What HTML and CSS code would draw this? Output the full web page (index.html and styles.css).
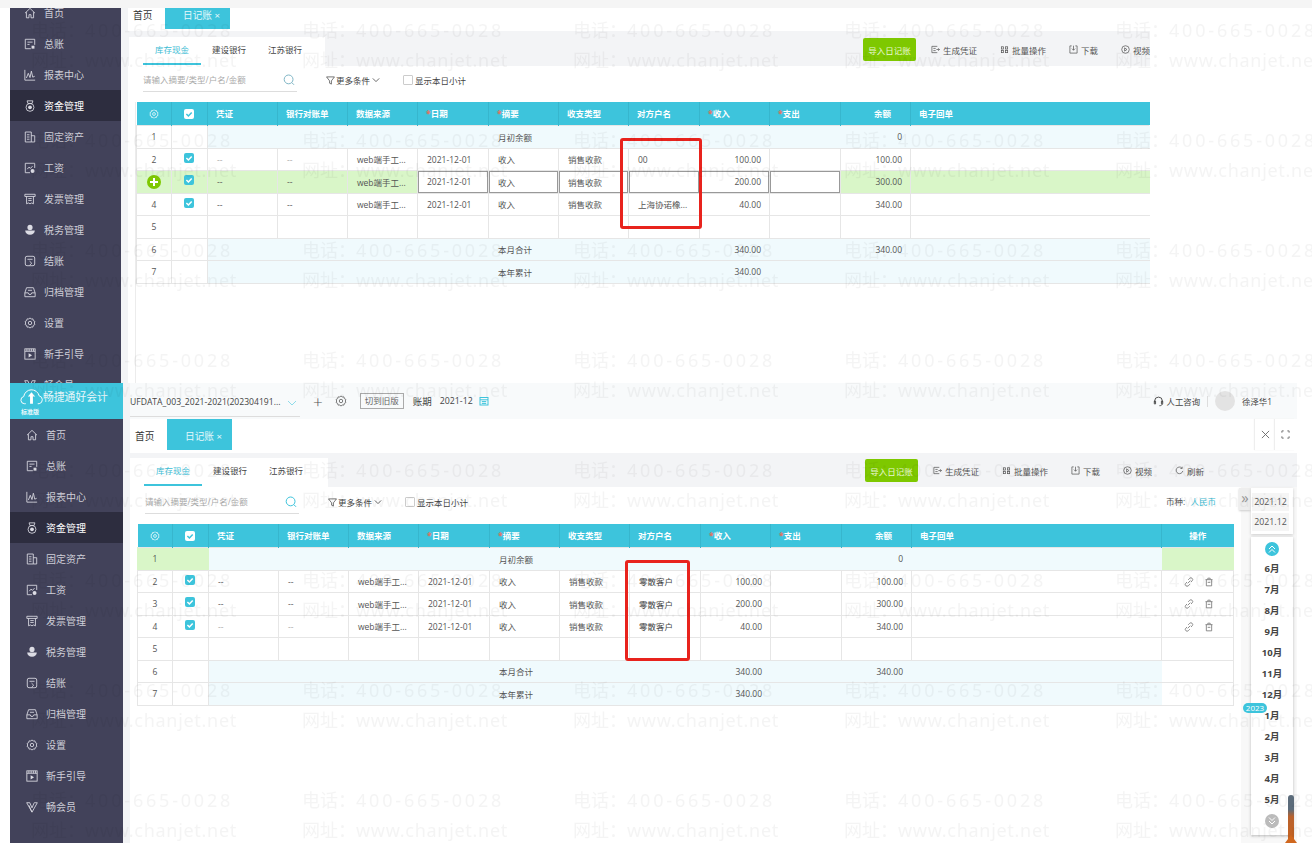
FILE: index.html
```html
<!DOCTYPE html>
<html>
<head>
  <meta charset="utf-8">
  <link rel="stylesheet" href="styles.css">
</head>
<body>
  <svg class="sprite">
    <symbol id="i-home" viewBox="0 0 14 14"><path d="M1.2 7.2 7 1.6l5.8 5.6M2.8 6v6.6h3V9h2.400v3.600h3V6"/></symbol>
    <symbol id="i-ledger" viewBox="0 0 14 14"><path d="M8 12.500H1.500v-11h11V8M4 4.800h6M4 7.500h2.500"/><rect class="solid" x="8.800" y="9" width="3.400" height="3.400"/></symbol>
    <symbol id="i-chart" viewBox="0 0 14 14"><path d="M1 1v12h12M2.800 10.500 5 5l2 5 1.600-7.500 1.600 7 2.300-1"/></symbol>
    <symbol id="i-bag" viewBox="0 0 14 14"><path d="M4.600 4 3.600 1h6.800l-1 3z"/><circle cx="7" cy="8.600" r="4.600"/><circle class="solid" cx="7" cy="8.600" r="2.200"/></symbol>
    <symbol id="i-doc" viewBox="0 0 14 14"><path d="M8.500 12.800h-7V1.200h7zM8.500 5.500h4v7.300h-4M3.400 4.400h3M3.400 7h3M3.400 9.600h3"/></symbol>
    <symbol id="i-pay" viewBox="0 0 14 14"><path d="M7 12.500H1.500v-11h11V7M3.800 8.400l2-2.400 1.800 1.400 2.400-2.600"/><circle class="solid" cx="10" cy="10.500" r="2.300"/></symbol>
    <symbol id="i-invoice" viewBox="0 0 14 14"><path d="M1 4V1.500h12V4M1 4h12M3 4v8.600l2-1 2 1 2-1 2 1V4M5 6.500h4M5 8.800h4"/></symbol>
    <symbol id="i-tax" viewBox="0 0 14 14"><circle class="solid" cx="7" cy="4" r="3"/><path class="solid" d="M1.400 7.600h11.200c0 3-2.400 5-5.600 5s-5.600-2-5.600-5z"/></symbol>
    <symbol id="i-close" viewBox="0 0 14 14"><rect x="1.500" y="1.500" width="11" height="11" rx="2"/><path d="M4 5h6M6.500 7.200 9 9.600l-2.500 2.400"/></symbol>
    <symbol id="i-archive" viewBox="0 0 14 14"><path d="M3 2h8l2 6v4.500H1V8zM1 8h4l.8 1.800h2.400L9 8h4M4.600 5h4.800"/></symbol>
    <symbol id="i-gear" viewBox="0 0 14 14"><path d="m7 1 1.400 1.400 2-.2.5 2 1.800 1L12 7l.7 1.800-1.800 1-.5 2-2-.2L7 13l-1.400-1.400-2 .2-.5-2-1.800-1L2 7l-.7-1.800 1.800-1 .5-2 2 .2z"/><circle cx="7" cy="7" r="2"/></symbol>
    <symbol id="i-guide" viewBox="0 0 14 14"><rect x="1" y="1" width="12" height="12"/><path d="M1 3.800h12M3.400 1v2.800M6 1v2.800M8.600 1v2.800M11 1v2.800"/><path class="solid" d="M5.400 6v5l4-2.500z"/></symbol>
    <symbol id="i-vip" viewBox="0 0 14 14"><path d="M.8 2h3.600L7 8l2.600-6h3.600L7 13zM3.400 5 7 13"/></symbol>
    <symbol id="i-check" viewBox="0 0 10 10"><path d="m2.400 5 2 2 3.300-3.600"/></symbol>
    <symbol id="i-search" viewBox="0 0 12 12"><circle cx="5.600" cy="5.400" r="4.400"/><path d="m8.800 8.600 2.200 2.200"/></symbol>
    <symbol id="i-filter" viewBox="0 0 10 10"><path d="M.6 1h8.800L6 5.400V9L4 8V5.400z"/></symbol>
    <symbol id="i-chev" viewBox="0 0 10 10"><path d="m1 3 4 4 4-4"/></symbol>
    <symbol id="i-dbl" viewBox="0 0 10 10"><path d="m2 5 3-3 3 3M2 8.500l3-3 3 3"/></symbol>
    <symbol id="i-gen" viewBox="0 0 10 10"><path d="M7 8.500H1v-7h6M2.600 3.800h2.600M2.600 6.200h2.600M6 5h3.400M8 3.600 9.400 5 8 6.400"/></symbol>
    <symbol id="i-batch" viewBox="0 0 10 10"><rect x="1.500" y="2" width="2.500" height="2.500"/><rect x="6" y="2" width="2.500" height="2.500"/><rect x="1.500" y="6" width="2.500" height="2.500"/><rect x="6" y="6" width="2.500" height="2.500"/></symbol>
    <symbol id="i-down" viewBox="0 0 10 10"><path d="M3 1H1v8h8V1H7M5 .8v5M3.200 4 5 5.800 6.800 4"/></symbol>
    <symbol id="i-video" viewBox="0 0 10 10"><circle cx="5" cy="5" r="4.200"/><path d="M4 3.200v3.600L6.600 5z"/></symbol>
    <symbol id="i-refresh" viewBox="0 0 10 10"><path d="M8.600 5.600A3.700 3.700 0 1 1 7.600 2.200M8 .8v2H6"/></symbol>
    <symbol id="i-link" viewBox="0 0 12 12"><path d="M5 3.400 6.800 1.600a2.100 2.100 0 0 1 3 3L8.400 6M7 8.600 5.200 10.400a2.100 2.100 0 0 1-3-3L3.600 6M4.400 7.600l3.200-3.200"/></symbol>
    <symbol id="i-trash" viewBox="0 0 12 12"><path d="M1.800 3.200h8.400M4.600 3V1.400h2.800V3M2.800 3.200v7.400h6.400V3.200M4.400 6.400h3.200"/></symbol>
    <symbol id="i-headset" viewBox="0 0 12 12"><path d="M1.800 7V5.400a4.200 4.200 0 0 1 8.400 0V7M1.400 5.600h1.400v3H1.400zM9.200 5.600h1.400v3H9.200zM10 8.600c0 1.400-1.200 2-3 2"/></symbol>
    <symbol id="i-cal" viewBox="0 0 10 10"><rect x="1" y="1.500" width="8" height="7.500"/><path d="M1 3.800h8M2.800 5.600h4.400M2.800 7.400h4.400"/></symbol>
    <symbol id="i-x" viewBox="0 0 10 10"><path d="m1 1 8 8M9 1 1 9"/></symbol>
    <symbol id="i-full" viewBox="0 0 10 10"><path d="M1 3V1h2M7 1h2v2M9 7v2H7M3 9H1V7"/></symbol>
    <symbol id="i-cloud" viewBox="0 0 24 18"><path d="M6 16H4.500a3.800 3.800 0 0 1-.6-7.500A8.200 8.200 0 0 1 20 7.800a4.200 4.200 0 0 1 0 8.200h-1.500"/><path class="solid" d="M12 4 8.200 8.400h2.300V16h3V8.400h2.300z"/></symbol>
  </svg>

  <div class="strip"></div>

  <!-- first capture -->
  <div class="shot upper">
    <aside class="side">
      <ul class="menu">
        <li class="menu-item"><svg class="mi"><use href="#i-home"/></svg>首页</li>
        <li class="menu-item"><svg class="mi"><use href="#i-ledger"/></svg>总账</li>
        <li class="menu-item"><svg class="mi"><use href="#i-chart"/></svg>报表中心</li>
        <li class="menu-item active"><svg class="mi"><use href="#i-bag"/></svg>资金管理</li>
        <li class="menu-item"><svg class="mi"><use href="#i-doc"/></svg>固定资产</li>
        <li class="menu-item"><svg class="mi"><use href="#i-pay"/></svg>工资</li>
        <li class="menu-item"><svg class="mi"><use href="#i-invoice"/></svg>发票管理</li>
        <li class="menu-item"><svg class="mi"><use href="#i-tax"/></svg>税务管理</li>
        <li class="menu-item"><svg class="mi"><use href="#i-close"/></svg>结账</li>
        <li class="menu-item"><svg class="mi"><use href="#i-archive"/></svg>归档管理</li>
        <li class="menu-item"><svg class="mi"><use href="#i-gear"/></svg>设置</li>
        <li class="menu-item"><svg class="mi"><use href="#i-guide"/></svg>新手引导</li>
        <li class="menu-item"><svg class="mi"><use href="#i-vip"/></svg>畅会员</li>
      </ul>
    </aside>
    <main class="main">
      <div class="tabbar">
        <span class="page-home">首页</span>
        <span class="page-tab">日记账 ×</span>
      </div>
      <div class="band">
        <div class="subtabs">
          <span class="subtab on">库存现金</span>
          <span class="subtab">建设银行</span>
          <span class="subtab">江苏银行</span>
        </div>
        <div class="toolbar">
          <button class="import">导入日记账</button>
          <span class="tool"><svg class="ti"><use href="#i-gen"/></svg>生成凭证</span>
          <span class="tool"><svg class="ti"><use href="#i-batch"/></svg>批量操作</span>
          <span class="tool"><svg class="ti"><use href="#i-down"/></svg>下载</span>
          <span class="tool"><svg class="ti"><use href="#i-video"/></svg>视频</span>
        </div>
      </div>
      <div class="filter">
        <div class="search">请输入摘要/类型/户名/金额<svg class="search-icon"><use href="#i-search"/></svg></div>
        <span class="more"><svg class="ti"><use href="#i-filter"/></svg>更多条件<svg class="chev"><use href="#i-chev"/></svg></span>
        <label class="daily"><span class="box"></span>显示本日小计</label>
      </div>
      <div class="sheet">
        <table class="grid">
          <colgroup><col class="c-no"><col class="c-ck"><col class="c"><col class="c"><col class="c"><col class="c1"><col class="c"><col class="c"><col class="c1"><col class="c"><col class="c1"><col class="c"><col></colgroup>
          <thead>
            <tr>
              <th class="mid"><svg class="hgear"><use href="#i-gear"/></svg></th>
              <th class="mid"><span class="ck white"><svg><use href="#i-check"/></svg></span></th>
              <th>凭证</th><th>银行对账单</th><th>数据来源</th>
              <th><i>*</i>日期</th><th><i>*</i>摘要</th><th>收支类型</th><th>对方户名</th>
              <th><i>*</i>收入</th><th><i>*</i>支出</th><th class="bal">余额</th><th>电子回单</th>
            </tr>
          </thead>
          <tbody>
            <tr class="sum">
              <td class="mid plain">1</td><td class="plain"></td><td></td><td></td><td></td><td></td><td>月初余额</td><td></td><td></td><td></td><td></td><td class="num">0</td><td></td>
            </tr>
            <tr>
              <td class="mid">2</td><td class="mid"><span class="ck"><svg><use href="#i-check"/></svg></span></td><td class="dash">--</td><td class="dash">--</td><td>web端手工...</td><td>2021-12-01</td><td>收入</td><td>销售收款</td><td>00</td><td class="num">100.00</td><td></td><td class="num">100.00</td><td class="open"></td>
            </tr>
            <tr class="editing">
              <td class="mid"><span class="add"></span></td><td class="mid"><span class="ck"><svg><use href="#i-check"/></svg></span></td><td>--</td><td>--</td><td>web端手工...</td><td class="edit">2021-12-01</td><td class="edit">收入</td><td class="edit">销售收款</td><td class="edit"></td><td class="edit num">200.00</td><td class="edit"></td><td class="num">300.00</td><td class="open"></td>
            </tr>
            <tr>
              <td class="mid">4</td><td class="mid"><span class="ck"><svg><use href="#i-check"/></svg></span></td><td>--</td><td>--</td><td>web端手工...</td><td>2021-12-01</td><td>收入</td><td>销售收款</td><td>上海协诺橡...</td><td class="num">40.00</td><td></td><td class="num">340.00</td><td class="open"></td>
            </tr>
            <tr>
              <td class="mid">5</td><td></td><td></td><td></td><td></td><td></td><td></td><td></td><td></td><td></td><td></td><td></td><td class="open"></td>
            </tr>
            <tr class="sum">
              <td class="mid plain">6</td><td class="plain"></td><td></td><td></td><td></td><td></td><td>本月合计</td><td></td><td></td><td class="num">340.00</td><td></td><td class="num">340.00</td><td></td>
            </tr>
            <tr class="sum">
              <td class="mid plain">7</td><td class="plain"></td><td></td><td></td><td></td><td></td><td>本年累计</td><td></td><td></td><td class="num">340.00</td><td></td><td></td><td></td>
            </tr>
          </tbody>
        </table>
        <div class="mark"></div>
      </div>
    </main>
  </div>

  <!-- second capture -->
  <div class="shot lower">
    <aside class="side">
      <div class="logo">
        <svg class="logo-cloud"><use href="#i-cloud"/></svg>
        <span class="logo-name">畅捷通好会计</span>
        <span class="logo-ed">标准版</span>
      </div>
      <ul class="menu">
        <li class="menu-item"><svg class="mi"><use href="#i-home"/></svg>首页</li>
        <li class="menu-item"><svg class="mi"><use href="#i-ledger"/></svg>总账</li>
        <li class="menu-item"><svg class="mi"><use href="#i-chart"/></svg>报表中心</li>
        <li class="menu-item active"><svg class="mi"><use href="#i-bag"/></svg>资金管理</li>
        <li class="menu-item"><svg class="mi"><use href="#i-doc"/></svg>固定资产</li>
        <li class="menu-item"><svg class="mi"><use href="#i-pay"/></svg>工资</li>
        <li class="menu-item"><svg class="mi"><use href="#i-invoice"/></svg>发票管理</li>
        <li class="menu-item"><svg class="mi"><use href="#i-tax"/></svg>税务管理</li>
        <li class="menu-item"><svg class="mi"><use href="#i-close"/></svg>结账</li>
        <li class="menu-item"><svg class="mi"><use href="#i-archive"/></svg>归档管理</li>
        <li class="menu-item"><svg class="mi"><use href="#i-gear"/></svg>设置</li>
        <li class="menu-item"><svg class="mi"><use href="#i-guide"/></svg>新手引导</li>
        <li class="menu-item"><svg class="mi"><use href="#i-vip"/></svg>畅会员</li>
      </ul>
    </aside>
    <main class="main">
      <div class="topbar">
        <div class="book">UFDATA_003_2021-2021(202304191...<svg class="chev teal"><use href="#i-chev"/></svg></div>
        <span class="plus">+</span>
        <svg class="top-gear"><use href="#i-gear"/></svg>
        <span class="old">切到旧版</span>
        <span class="period">账期</span>
        <span class="period-val">2021-12</span>
        <svg class="cal"><use href="#i-cal"/></svg>
        <div class="user">
          <svg class="headset"><use href="#i-headset"/></svg>
          <span>人工咨询</span>
          <span class="sep"></span>
          <span class="avatar"></span>
          <span>徐泽华1</span>
        </div>
      </div>
      <div class="tabbar">
        <span class="page-home">首页</span>
        <span class="page-tab">日记账 ×</span>
        <div class="win">
          <span class="win-btn"><svg><use href="#i-x"/></svg></span>
          <span class="win-btn"><svg><use href="#i-full"/></svg></span>
        </div>
      </div>
      <div class="band">
        <div class="subtabs">
          <span class="subtab on">库存现金</span>
          <span class="subtab">建设银行</span>
          <span class="subtab">江苏银行</span>
        </div>
        <div class="toolbar">
          <button class="import">导入日记账</button>
          <span class="tool"><svg class="ti"><use href="#i-gen"/></svg>生成凭证</span>
          <span class="tool"><svg class="ti"><use href="#i-batch"/></svg>批量操作</span>
          <span class="tool"><svg class="ti"><use href="#i-down"/></svg>下载</span>
          <span class="tool"><svg class="ti"><use href="#i-video"/></svg>视频</span>
          <span class="tool"><svg class="ti"><use href="#i-refresh"/></svg>刷新</span>
        </div>
      </div>
      <div class="filter">
        <div class="search">请输入摘要/类型/户名/金额<svg class="search-icon"><use href="#i-search"/></svg></div>
        <span class="more"><svg class="ti"><use href="#i-filter"/></svg>更多条件<svg class="chev"><use href="#i-chev"/></svg></span>
        <label class="daily"><span class="box"></span>显示本日小计</label>
        <span class="currency">币种: <b>人民币</b></span>
      </div>
      <div class="sheet">
        <table class="grid">
          <colgroup><col class="c-no"><col class="c-ck"><col class="c"><col class="c"><col class="c"><col class="c1"><col class="c"><col class="c"><col class="c1"><col class="c"><col class="c1"><col class="c"><col><col class="c-op"></colgroup>
          <thead>
            <tr>
              <th class="mid"><svg class="hgear"><use href="#i-gear"/></svg></th>
              <th class="mid"><span class="ck white"><svg><use href="#i-check"/></svg></span></th>
              <th>凭证</th><th>银行对账单</th><th>数据来源</th>
              <th><i>*</i>日期</th><th><i>*</i>摘要</th><th>收支类型</th><th>对方户名</th>
              <th><i>*</i>收入</th><th><i>*</i>支出</th><th class="bal">余额</th><th>电子回单</th><th class="mid">操作</th>
            </tr>
          </thead>
          <tbody>
            <tr class="sum">
              <td class="mid lime">1</td><td class="lime"></td><td></td><td></td><td></td><td></td><td>月初余额</td><td></td><td></td><td></td><td></td><td class="num">0</td><td></td><td class="lime"></td>
            </tr>
            <tr>
              <td class="mid">2</td><td class="mid"><span class="ck"><svg><use href="#i-check"/></svg></span></td><td>--</td><td>--</td><td>web端手工...</td><td>2021-12-01</td><td>收入</td><td>销售收款</td><td class="cust">零散客户</td><td class="num">100.00</td><td></td><td class="num">100.00</td><td></td>
              <td class="mid"><span class="ops"><svg><use href="#i-link"/></svg><svg><use href="#i-trash"/></svg></span></td>
            </tr>
            <tr>
              <td class="mid">3</td><td class="mid"><span class="ck"><svg><use href="#i-check"/></svg></span></td><td>--</td><td>--</td><td>web端手工...</td><td>2021-12-01</td><td>收入</td><td>销售收款</td><td class="cust">零散客户</td><td class="num">200.00</td><td></td><td class="num">300.00</td><td></td>
              <td class="mid"><span class="ops"><svg><use href="#i-link"/></svg><svg><use href="#i-trash"/></svg></span></td>
            </tr>
            <tr>
              <td class="mid">4</td><td class="mid"><span class="ck"><svg><use href="#i-check"/></svg></span></td><td class="dash">--</td><td class="dash">--</td><td>web端手工...</td><td>2021-12-01</td><td>收入</td><td>销售收款</td><td class="cust">零散客户</td><td class="num">40.00</td><td></td><td class="num">340.00</td><td></td>
              <td class="mid"><span class="ops"><svg><use href="#i-link"/></svg><svg><use href="#i-trash"/></svg></span></td>
            </tr>
            <tr>
              <td class="mid">5</td><td></td><td></td><td></td><td></td><td></td><td></td><td></td><td></td><td></td><td></td><td></td><td></td><td></td>
            </tr>
            <tr class="sum">
              <td class="mid plain">6</td><td class="plain"></td><td></td><td></td><td></td><td></td><td>本月合计</td><td></td><td></td><td class="num">340.00</td><td></td><td class="num">340.00</td><td></td><td class="plain"></td>
            </tr>
            <tr class="sum">
              <td class="mid plain">7</td><td class="plain"></td><td></td><td></td><td></td><td></td><td>本年累计</td><td></td><td></td><td class="num">340.00</td><td></td><td></td><td></td><td class="plain"></td>
            </tr>
          </tbody>
        </table>
        <div class="mark"></div>
      </div>

      <div class="rail">
        <span class="rail-toggle">»</span>
        <div class="rail-range">
          <span>2021.12</span>
          <span>2021.12</span>
        </div>
        <div class="rail-months">
          <span class="round up"><svg><use href="#i-dbl"/></svg></span>
          <span>6月</span><span>7月</span><span>8月</span><span>9月</span><span>10月</span><span>11月</span><span>12月</span>
          <span>1月</span><span>2月</span><span>3月</span><span>4月</span><span>5月</span>
          <span class="round down"><svg><use href="#i-dbl"/></svg></span>
        </div>
        <span class="year">2023</span>
        <span class="drag"></span>
      </div>
    </main>
  </div>

  <svg class="wm" width="1312" height="843">
    <defs>
      <pattern id="wm-tile" width="271" height="110" patternUnits="userSpaceOnUse">
        <text x="31" y="37">电话：<tspan class="wm-num">400-665-0028</tspan></text>
        <text x="31" y="67">网址：<tspan class="wm-url">www.chanjet.net</tspan></text>
      </pattern>
    </defs>
    <rect width="1312" height="843" fill="url(#wm-tile)"/>
  </svg>
</body>
</html>
```

FILE: styles.css
```css
* {
  box-sizing: border-box;
}

body {
  position: relative;
  width: 1312px;
  height: 843px;
  margin: 0;
  overflow: hidden;
  background: #fff;
  font-family: 'Open Sans', 'Noto Sans CJK SC', sans-serif;
  font-size: 8.5px;
  color: #555;
}

ul {
  margin: 0;
  padding: 0;
  list-style: none;
}

svg {
  fill: none;
  stroke: currentColor;
  stroke-width: 1;
}

.solid {
  fill: currentColor;
  stroke: none;
}

.sprite {
  display: none;
}

.strip {
  height: 8px;
  background: #f5f5f5;
}

.shot {
  position: relative;
  display: flex;
  padding-left: 10px;
  overflow: hidden;
}

.upper {
  height: 375px;
}

.lower {
  height: 460px;
}

/* sidebar */
.side {
  flex: 0 0 auto;
  background: #42425a;
}

.upper .side {
  width: 111px;
}

.lower .side {
  width: 113px;
}

.upper .menu {
  margin-top: -11px;
}

.menu-item {
  display: flex;
  align-items: center;
  height: 31px;
  padding-left: 14px;
  font-size: 10px;
  color: #cfcfd8;
}

.lower .menu-item {
  padding-left: 16px;
}

.menu-item.active {
  background: #2d2d3f;
  color: #fff;
}

.mi {
  width: 12px;
  height: 12px;
  margin-right: 8px;
  color: #dcdce4;
}

.logo {
  position: relative;
  height: 36px;
  background: #3dc4dc;
  color: #e8f8fb;
}

.logo-cloud {
  position: absolute;
  left: 10px;
  top: 5px;
  width: 23px;
  height: 18px;
  color: #fff;
}

.logo-name {
  position: absolute;
  left: 33px;
  top: 6px;
  font-size: 10.800px;
  line-height: 16px;
  white-space: nowrap;
}

.logo-ed {
  position: absolute;
  left: 11px;
  top: 24px;
  font-size: 6px;
  font-weight: 700;
  line-height: 10px;
}

/* main column */
.main {
  flex: 1;
  min-width: 0;
  position: relative;
  display: flex;
  flex-direction: column;
  border-left: 7px solid #f3f4f6;
}

.upper .main {
  flex: 0 0 1029px;
  overflow: hidden;
}

.lower .main {
  flex: 0 0 1174px;
}

.topbar {
  display: flex;
  align-items: center;
  height: 36px;
  flex: 0 0 auto;
  background: #f8fafb;
  font-size: 9.500px;
  color: #444;
}

.book {
  position: relative;
  width: 170px;
  height: 30px;
  margin-top: 1px;
  font-size: 8.600px;
  line-height: 30px;
  white-space: nowrap;
  border-bottom: 1px solid #ddd;
}

.chev {
  width: 8px;
  height: 8px;
}

.book .chev {
  position: absolute;
  right: 3px;
  top: 11px;
  width: 10px;
  height: 10px;
}

.teal {
  color: #8fdcea;
}

.plus {
  margin-left: 13px;
  font-size: 17px;
  font-weight: 300;
  color: #555;
}

.top-gear {
  width: 12px;
  height: 12px;
  margin-left: 12px;
  color: #666;
}

.old {
  width: 44px;
  height: 16px;
  margin-left: 13px;
  border: 1px solid #aaa;
  font-size: 8.500px;
  line-height: 14px;
  text-align: center;
  color: #666;
}

.period {
  margin-left: 9px;
}

.period-val {
  margin-left: 8px;
  font-size: 8.800px;
}

.cal {
  width: 10px;
  height: 10px;
  margin-left: 6px;
  color: #3dc4dc;
}

.user {
  display: flex;
  align-items: center;
  margin-left: auto;
  padding-right: 25px;
  font-size: 8.400px;
}

.headset {
  width: 11px;
  height: 11px;
  margin-right: 3px;
}

.sep {
  width: 1px;
  height: 11px;
  margin: 0 7px;
  background: #ddd;
}

.avatar {
  width: 20px;
  height: 20px;
  margin-right: 7px;
  border-radius: 50%;
  background: #e3e3e3;
}

.tabbar {
  display: flex;
  flex: 0 0 auto;
  padding-left: 5px;
  font-size: 9.700px;
}

.upper .tabbar {
  height: 23px;
}

.lower .tabbar {
  height: 34px;
}

.page-home {
  width: 32px;
  padding-top: 1px;
  color: #333;
  line-height: 14px;
  align-self: center;
}

.page-tab {
  width: 65px;
  padding-left: 18px;
  background: #3dc4dc;
  color: #e6f8fb;
  white-space: nowrap;
}

.upper .page-tab {
  height: 21px;
  line-height: 15px;
}

.lower .page-tab {
  height: 31px;
  line-height: 35px;
}

.upper .page-home {
  align-self: flex-start;
}

.win {
  display: flex;
  margin-left: auto;
  padding-right: 2px;
}

.win-btn {
  display: flex;
  align-items: center;
  justify-content: center;
  width: 20px;
  height: 31px;
  box-shadow: -1px 0 1px #eee;
  color: #666;
}

.win-btn svg {
  width: 9px;
  height: 9px;
}

.band {
  display: flex;
  flex: 0 0 auto;
  background: #f3f4f6;
}

.upper .band {
  height: 35px;
}

.lower .band {
  height: 34px;
}

.subtabs {
  display: flex;
  width: 198px;
  height: 29px;
  margin-top: auto;
  padding-left: 14px;
  background: #fff;
}

.upper .subtabs {
  margin-left: 1px;
}

.subtab {
  height: 28px;
  padding: 0 11px;
  line-height: 26px;
  color: #444;
}

.subtab.on {
  padding: 0 12px;
  border-bottom: 2px solid #3dc4dc;
  color: #3dbcd4;
}

.toolbar {
  display: flex;
  align-items: center;
  gap: 23px;
  height: 23px;
  margin-top: 7px;
  margin-left: 538px;
  white-space: nowrap;
  color: #555;
}

.lower .toolbar {
  margin-top: 6px;
  margin-left: 537px;
}

.import {
  width: 53px;
  height: 23px;
  margin-right: -8px;
  padding: 0;
  border: 0;
  border-radius: 2px;
  background: #7ec800;
  font: inherit;
  font-size: 8.500px;
  color: #e9f8d5;
}

.tool {
  display: flex;
  align-items: center;
}

.ti {
  width: 9px;
  height: 9px;
  margin-right: 3px;
  stroke-width: 0.800;
}

.filter {
  position: relative;
  display: flex;
  flex: 0 0 auto;
  padding: 2px 0 0 15px;
}

.upper .filter {
  height: 36px;
}

.lower .filter {
  height: 37px;
  padding-top: 3px;
}

.search {
  position: relative;
  width: 154px;
  height: 24px;
  border-bottom: 1px solid #ddd;
  line-height: 24px;
  color: #aaa;
}

.search-icon {
  position: absolute;
  right: 2px;
  top: 6px;
  width: 12px;
  height: 12px;
  color: #7fb6c6;
}

.lower .search-icon {
  color: #3dc4dc;
}

.more {
  display: flex;
  align-items: center;
  height: 24px;
  margin-left: 29px;
  color: #444;
}

.more .ti {
  margin-right: 1px;
}

.more .chev {
  margin-left: 2px;
}

.daily {
  display: flex;
  align-items: center;
  height: 24px;
  margin-left: 23px;
  color: #444;
}

.box {
  width: 10px;
  height: 10px;
  margin-right: 2px;
  border: 1px solid #ccc;
  border-radius: 1px;
}

.currency {
  position: absolute;
  right: 81px;
  top: 8px;
  line-height: 14px;
}

.currency b {
  margin-left: 3px;
  font-weight: 400;
  color: #3dbcd4;
}

/* table */
.sheet {
  position: relative;
  flex: 1;
  padding-left: 8px;
}

.upper .sheet {
  margin-left: 7px;
  padding-left: 0;
  border-left: 1px solid #ececec;
}

.lower .sheet {
  padding-left: 7px;
}

.grid {
  border-collapse: collapse;
  table-layout: fixed;
  font-size: 8.500px;
}

.upper .grid {
  width: 1014px;
}

.lower .grid {
  width: 1097px;
}

.c-no {
  width: 35px;
}

.c-ck {
  width: 36px;
}

.c {
  width: 70px;
}

.c1 {
  width: 71px;
}

.c-op {
  width: 72px;
}

.grid th {
  height: 23px;
  padding: 0 0 0 8px;
  background: #3dc4dc;
  border-right: 1px solid #37b6cd;
  color: #fff;
  font-weight: 700;
  text-align: left;
}

.grid th:last-child {
  border-right: 0;
}

.grid th i {
  font-style: normal;
  color: #e8705f;
}

.grid th.mid,
.grid td.mid {
  padding: 0;
  text-align: center;
}

.grid th.bal {
  padding-right: 19px;
  text-align: right;
}

.grid td {
  padding: 0 8px 0 9px;
  border: 1px solid #e6e6e6;
  white-space: nowrap;
  overflow: hidden;
}

.grid tbody tr:nth-child(odd) {
  height: 23px;
}

.grid tbody tr:nth-child(even) {
  height: 22px;
}

.grid td.num {
  text-align: right;
}

.grid td.dash {
  color: #aaa;
}

.grid td.cust {
  color: #444;
}

.grid td.open {
  border-right: 0;
  border-left: 0;
}

.grid tr.sum td {
  background: #f0fafd;
  border-left-color: #f0fafd;
  border-right-color: #f0fafd;
}

.grid tr.sum td.plain {
  background: #fff;
  border-left-color: #e6e6e6;
  border-right-color: #e6e6e6;
}

.grid tr.sum td.lime {
  background: #d9f6c8;
  border-left-color: #d9f6c8;
  border-right-color: #d9f6c8;
}

.grid tr.editing td {
  background: #d9f6c8;
}

.grid tr.editing td.edit {
  background: #fff;
  box-shadow: inset 0 0 0 1px #999;
}

.ck {
  display: inline-block;
  width: 10px;
  height: 10px;
  margin: 0 2px 3px 0;
  border-radius: 2px;
  background: #3dc4dc;
  vertical-align: middle;
}

.ck svg {
  display: block;
  width: 10px;
  height: 10px;
  color: #fff;
  stroke-width: 1.500;
}

.ck.white {
  margin-bottom: 0;
  background: #fff;
}

.ck.white svg {
  color: #3dc4dc;
}

.hgear {
  width: 10px;
  height: 10px;
  vertical-align: middle;
  color: #fff;
}

.add {
  position: relative;
  display: inline-block;
  width: 14px;
  height: 14px;
  border-radius: 50%;
  background: #7ec800;
  vertical-align: middle;
}

.add::before,
.add::after {
  content: '';
  position: absolute;
  background: #fff;
}

.add::before {
  left: 3px;
  top: 6px;
  width: 8px;
  height: 2px;
}

.add::after {
  left: 6px;
  top: 3px;
  width: 2px;
  height: 8px;
}

.ops {
  display: inline-flex;
  gap: 10px;
  margin-left: 2px;
  vertical-align: middle;
}

.ops svg {
  width: 10px;
  height: 10px;
  color: #777;
}

.mark {
  position: absolute;
  border: 3px solid #e8231d;
  border-radius: 3px;
}

.upper .mark {
  left: 484px;
  top: 36px;
  width: 82px;
  height: 91px;
}

.lower .mark {
  left: 495px;
  top: 36px;
  width: 65px;
  height: 101px;
}

/* month rail on the right */
.rail {
  position: absolute;
  left: 1111px;
  top: 104px;
  width: 56px;
  bottom: 0;
  background: #f8f8f8;
}

.rail-toggle {
  position: absolute;
  left: -2px;
  top: 1px;
  width: 12px;
  height: 22px;
  background: #eee;
  box-shadow: 0 1px 2px #ccc;
  color: #999;
  font-size: 15px;
  line-height: 18px;
  text-align: center;
}

.rail-range {
  position: absolute;
  left: 10px;
  top: 1px;
  display: flex;
  flex-direction: column;
  gap: 2px;
  width: 42px;
  height: 46px;
  padding: 5px 4px 0 1px;
  background: #fff;
  box-shadow: 0 1px 3px #ccc;
  font-size: 8.800px;
  color: #555;
}

.rail-range span {
  height: 18px;
  background: #f5f5f5;
  line-height: 18px;
  text-align: center;
}

.rail-months {
  position: absolute;
  left: 10px;
  top: 50px;
  display: flex;
  flex-direction: column;
  align-items: center;
  width: 42px;
  height: 298px;
  background: #fff;
  box-shadow: 0 1px 3px #bbb;
  font-size: 9.500px;
  font-weight: 700;
  color: #444;
}

.rail-months span {
  height: 21px;
  line-height: 21px;
}

.round {
  display: flex;
  align-items: center;
  justify-content: center;
  width: 14px;
  height: 14px !important;
  border-radius: 50%;
  color: #fff;
}

.round svg {
  width: 10px;
  height: 10px;
}

.round.up {
  margin-top: 5px;
  margin-bottom: 2px;
  background: #3dc4dc;
}

.round.down {
  margin-top: 4px;
  background: #bbb;
}

.round.down svg {
  transform: rotate(180deg);
}

.year {
  position: absolute;
  left: 2px;
  top: 216px;
  width: 24px;
  height: 10px;
  border-radius: 5px;
  background: #3dc4dc;
  color: #fff;
  font-size: 8px;
  line-height: 10px;
  text-align: center;
}

.drag {
  position: absolute;
  left: 47px;
  top: 308px;
  width: 6px;
  height: 48px;
  border-radius: 3px 3px 0 0;
  background: linear-gradient(#5b6b7a 30%, #b8622e 45%, #c8621e);
}

.drag::after {
  content: '';
  position: absolute;
  left: -3px;
  bottom: 0;
  border-left: 6px solid transparent;
  border-right: 6px solid transparent;
  border-bottom: 8px solid #d0671e;
}

/* watermark over both captures */
.wm {
  position: absolute;
  left: 0;
  top: 0;
  pointer-events: none;
  stroke: none;
}

.wm text {
  font-family: 'Noto Sans', 'Noto Sans CJK SC', sans-serif;
  font-size: 18px;
  fill: rgba(0, 0, 0, 0.045);
  stroke: none;
}

.wm-num {
  letter-spacing: 2.800px;
}

.wm-url {
  letter-spacing: 0.700px;
}
```
